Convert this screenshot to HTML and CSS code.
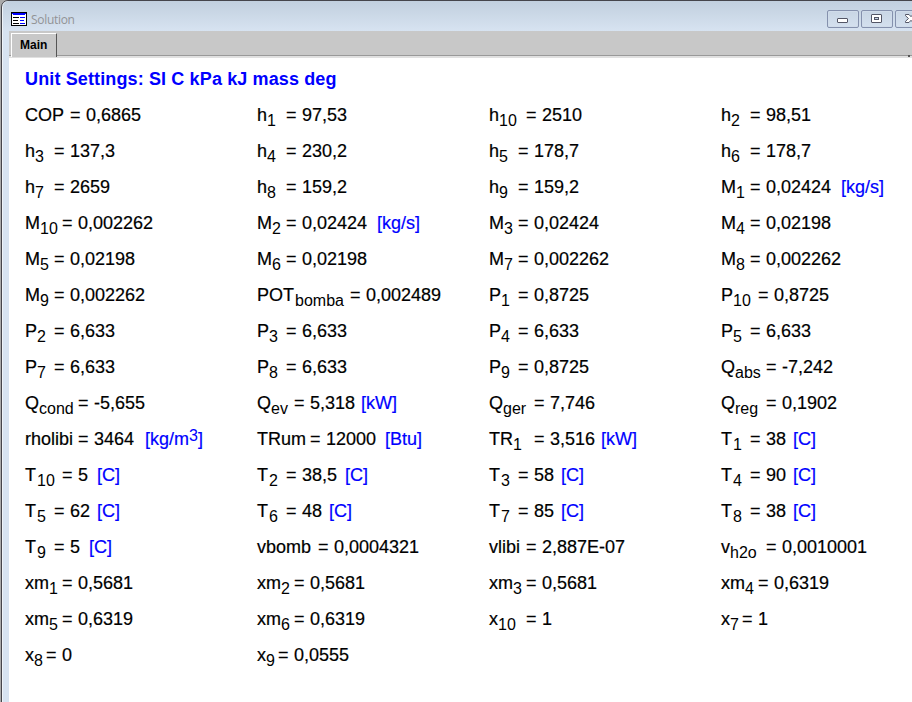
FILE: index.html
```
<!DOCTYPE html>
<html lang="en">
<head>
<meta charset="utf-8">
<title>Solution</title>
<link rel="stylesheet" href="styles.css">
</head>
<body>
<div class="window">
  <header class="titlebar">
    <svg class="app-icon" width="16" height="14" viewBox="0 0 16 14" shape-rendering="crispEdges">
      <path fill="#000" d="M0 0h16v14H0z"/>
      <path fill="#fff" d="M1 2h14v11H1z"/>
      <path fill="#00f" d="M1 1h14v1H1zM2 2h12v1H2zM9 5h5v1H9zM9 8h4v1H9zM9 11h5v1H9z"/>
      <path fill="#000" d="M2 5h6v1H2zM2 8h5v1H2zM2 11h6v1H2z"/>
    </svg>
    <span class="title">Solution</span>
    <div class="controls">
      <span class="control"><svg width="30" height="16" viewBox="0 0 30 16"><rect x="9.500" y="7.500" width="10" height="4" rx=".5" fill="#fff" stroke="#535666"/></svg></span>
      <span class="control"><svg width="30" height="16" viewBox="0 0 30 16"><rect x="9.500" y="3.500" width="10" height="8" rx=".5" fill="#fff" stroke="#535666"/><rect x="12.500" y="6.500" width="4" height="2" fill="#c5d3e4" stroke="#535666"/></svg></span>
      <span class="control"><svg width="30" height="16" viewBox="0 0 30 16"><path d="M9.500 3.500h3.500l2 2.200 2-2.200h3.500v1.200l-3 2.800 3 2.800v1.200h-3.500l-2-2.200-2 2.200h-3.500v-1.200l3-2.800-3-2.800z" fill="#fff" stroke="#535666"/></svg></span>
    </div>
  </header>
  <nav class="tabs"><span class="tab">Main</span><span class="tabs-end"></span></nav>
  <main class="solution">
    <h1>Unit Settings: SI C kPa kJ mass deg</h1>
    <div class="grid" id="grid"></div>
  </main>
</div>
<script src="script.js"></script>
</body>
</html>
```
FILE: script.js
```
// name_subscript | tab stop of "=" | value | unit | tab stop of unit
const rows = `
COP|5|0,6865
h_1|3|97,53
h_10|4|2510
h_2|3|98,51
h_3|3|137,3
h_4|3|230,2
h_5|3|178,7
h_6|3|178,7
h_7|3|2659
h_8|3|159,2
h_9|3|159,2
M_1|3|0,02424|[kg/s]|14
M_10|4|0,002262
M_2|3|0,02424|[kg/s]|14
M_3|3|0,02424
M_4|3|0,02198
M_5|3|0,02198
M_6|3|0,02198
M_7|3|0,002262
M_8|3|0,002262
M_9|3|0,002262
POT_bomba|11|0,002489
P_1|3|0,8725
P_10|4|0,8725
P_2|3|6,633
P_3|3|6,633
P_4|3|6,633
P_5|3|6,633
P_7|3|6,633
P_8|3|6,633
P_9|3|0,8725
Q_abs|5|-7,242
Q_cond|6|-5,655
Q_ev|4|5,318|[kW]|12
Q_ger|5|7,746
Q_reg|5|0,1902
rholibi|6|3464|[kg/m^3]|14
TRum|6|12000|[Btu]|15
TR_1|5|3,516|[kW]|13
T_1|3|38|[C]|8
T_10|4|5|[C]|8
T_2|3|38,5|[C]|10
T_3|3|58|[C]|8
T_4|3|90|[C]|8
T_5|3|62|[C]|8
T_6|3|48|[C]|8
T_7|3|85|[C]|8
T_8|3|38|[C]|8
T_9|3|5|[C]|7
vbomb|7|0,0004321
vlibi|4|2,887E-07
v_h2o|5|0,0010001
xm_1|4|0,5681
xm_2|4|0,5681
xm_3|4|0,5681
xm_4|4|0,6319
xm_5|4|0,6319
xm_6|4|0,6319
x_10|4|1
x_7|2|1
x_8|2|0
x_9|2|0,0555`.trim().split("\n");

const STOP = 8;
document.getElementById("grid").innerHTML = rows.map(row => {
  const [name, eq, value, unit, at] = row.split("|");
  const label = name.replace(/_(.+)/, "<sub>$1</sub>");
  const nameWidth = eq * STOP + 5;
  const wide = /T_/.test(name) ? " after-t" : "";
  let html = `<span class="name${wide}" style="width:${nameWidth}px">${label}</span>`;
  if (unit) {
    const text = unit.replace(/\^(\d)/, "<sup>$1</sup>");
    html += `<span class="value" style="width:${at * STOP + 8 - nameWidth}px">= ${value}</span><span class="unit">${text}</span>`;
  } else {
    html += `<span class="value">= ${value}</span>`;
  }
  return `<div class="cell">${html}</div>`;
}).join("");
```
FILE: styles.css
```
* { box-sizing: border-box; }
html, body { margin: 0; height: 100%; overflow: hidden; background: #aaa; }
.window {
  width: 930px;
  height: 720px;
  margin-left: 1px;
  border: 1px solid #45454b;
  border-radius: 7px 0 0 0;
  background: #d7e3f1;
  box-shadow: inset 1px 1px 0 #eef3f8;
  padding-left: 7px;
  font-family: "Liberation Sans", Arial, sans-serif;
}
.titlebar {
  height: 30px;
  display: flex;
  align-items: flex-start;
  background: linear-gradient(#c1cfde, #d7e3f1);
  margin-left: -6px;
  padding: 0 0 0 8px;
  border-radius: 6px 0 0 0;
}
.app-icon { margin-top: 11px; }
.title { margin: 10px 0 0 4px; font: 12px/17px "Open Sans", sans-serif; color: #929396; letter-spacing: -0.3px; }
.controls { display: flex; gap: 2px; margin-left: auto; margin-top: 9px; padding-right: 3px; }
.control { width: 32px; height: 18px; border: 1px solid #8591ad; border-radius: 2px; box-shadow: inset 0 0 0 1px #d0dcea; display: block; }
.control svg { display: block; }
.tabs { display: flex; height: 27px; background: #c8c8c8; border-bottom: 2px solid #e0e0e0; box-shadow: inset 0 -1px #999; padding: 2px 0 0 2px; }
.tab {
  width: 46px;
  height: 24px;
  background: #c8c8c8;
  border: 1px solid #fff;
  border-right: 1px solid #555;
  border-bottom: 0;
  font: bold 12px/23px "Liberation Sans", Arial, sans-serif;
  padding-left: 8px;
}
.tabs-end { width: 2px; height: 2px; background: #555; margin: 22px 0 0 851px; }
.solution { height: 662px; background: #fff; padding: 9px 0 0 16px; color: #000; }
h1 { margin: 0; font-size: 18px; line-height: 24px; letter-spacing: 0.13px; color: #00f; white-space: nowrap; }
.grid { display: grid; grid-template-columns: repeat(4, 232px); grid-auto-rows: 36px; padding-top: 6px; }
.cell { display: flex; font-size: 18px; line-height: 36px; white-space: pre; -webkit-text-stroke: 0.2px; }
.name, .value { flex: none; }
.value { word-spacing: 0.5px; }
.unit { color: #00f; }
sub, sup { font-size: 16px; line-height: 0; position: relative; vertical-align: baseline; -webkit-text-stroke: 0; }
sub { top: 5px; }
.after-t sub { margin-left: 1px; }
sup { top: -4px; }
```
